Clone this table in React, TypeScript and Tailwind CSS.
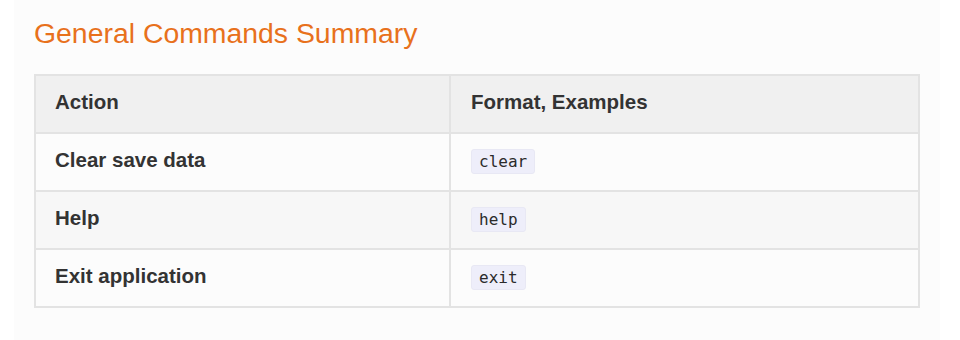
const rows = [
  { action: "Clear save data", example: "clear" },
  { action: "Help", example: "help" },
  { action: "Exit application", example: "exit" },
];

export default function App() {
  return (
    <div className="min-h-[340px] bg-white pl-[14px] pr-5 font-['Liberation_Sans',Arial,sans-serif] text-[#333333]">
      <div className="min-h-[340px] bg-[#fcfcfc] px-5 pt-4">
        <h2 className="text-[28.4px] leading-[34px] font-normal text-[#e8711c]">General Commands Summary</h2>
        <table className="mt-6 w-[886px] table-fixed border-collapse border-2 border-[#e3e3e3] text-[20.5px] leading-6">
          <colgroup>
            <col className="w-[415px]" />
            <col />
          </colgroup>
          <thead>
            <tr className="bg-[#f0f0f0]">
              <th className="border-2 border-[#e3e3e3] pt-[14px] pb-[18px] pl-[19px] text-left font-bold">Action</th>
              <th className="border-2 border-[#e3e3e3] pt-[14px] pb-[18px] pl-5 text-left font-bold">Format, Examples</th>
            </tr>
          </thead>
          <tbody>
            {rows.map((r, i) => (
              <tr key={r.example} className={i % 2 === 1 ? "bg-[#f7f7f7]" : "bg-[#fcfcfc]"}>
                <td className="border-2 border-[#e3e3e3] pt-[14px] pb-[18px] pl-[19px] font-bold">{r.action}</td>
                <td className="border-2 border-[#e3e3e3] pt-[15px] pb-[16px] pl-5">
                  <code className="block w-fit rounded-[3px] border border-[#e8e8f4] bg-[#eeeefa] px-[7px] py-[2px] font-['DejaVu_Sans_Mono',monospace] text-[16px] leading-[19px] text-[#2b2b2b]">
                    {r.example}
                  </code>
                </td>
              </tr>
            ))}
          </tbody>
        </table>
      </div>
    </div>
  );
}
